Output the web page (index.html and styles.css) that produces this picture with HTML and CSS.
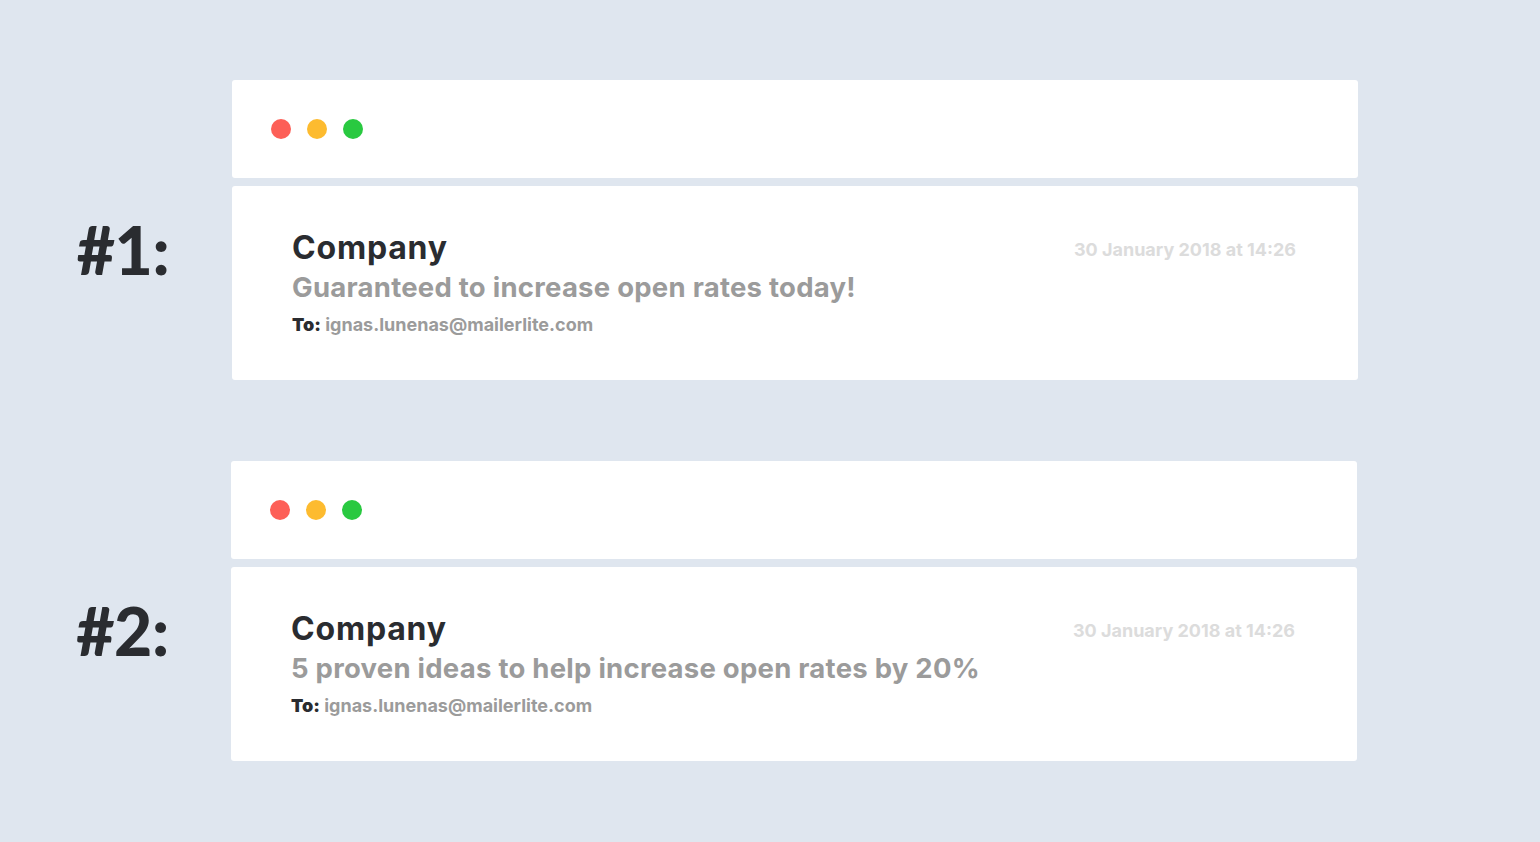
FILE: index.html
```html
<!DOCTYPE html>
<html>
<head>
<meta charset="utf-8">
<link rel="stylesheet" href="styles.css">
</head>
<body>
<main class="page">
  <section class="row row-1">
    <div class="label">#1:</div>
    <div class="window">
      <div class="titlebar">
        <span class="dot dot-red"></span>
        <span class="dot dot-yellow"></span>
        <span class="dot dot-green"></span>
      </div>
      <div class="mail">
        <div class="mail-info">
          <div class="sender">Company</div>
          <div class="subject">Guaranteed to increase open rates today!</div>
          <div class="to"><b>To:</b> ignas.lunenas@mailerlite.com</div>
        </div>
        <div class="date">30 January 2018 at 14:26</div>
      </div>
    </div>
  </section>
  <section class="row row-2">
    <div class="label">#2:</div>
    <div class="window">
      <div class="titlebar">
        <span class="dot dot-red"></span>
        <span class="dot dot-yellow"></span>
        <span class="dot dot-green"></span>
      </div>
      <div class="mail">
        <div class="mail-info">
          <div class="sender">Company</div>
          <div class="subject">5 proven ideas to help increase open rates by 20%</div>
          <div class="to"><b>To:</b> ignas.lunenas@mailerlite.com</div>
        </div>
        <div class="date">30 January 2018 at 14:26</div>
      </div>
    </div>
  </section>
</main>
</body>
</html>
```
FILE: styles.css
```css
html, body {
  margin: 0;
  padding: 0;
  background: #dfe6ef;
  font-family: Inter, "Open Sans", "Liberation Sans", sans-serif;
}
.page {
  width: 1540px;
  height: 842px;
  padding-top: 80px;
  box-sizing: border-box;
  display: flex;
  flex-direction: column;
  gap: 81px;
}
.row {
  display: grid;
  grid-template-columns: 232px 1126px;
}
.row-2 {
  grid-template-columns: 231px 1126px;
}
.label {
  padding-left: 14px;
  text-align: center;
  font-family: Lato, "Open Sans", sans-serif;
  font-weight: 900;
  font-size: 66px;
  color: #2a2c30;
  padding-top: 137px;
  line-height: 66px;
  letter-spacing: -0.5px;
}
.window {
  display: flex;
  flex-direction: column;
  gap: 8px;
}
.titlebar {
  background: #fff;
  height: 98px;
  border-radius: 3px;
  display: flex;
  align-items: center;
  gap: 16px;
  padding-left: 39px;
}
.dot {
  width: 20px;
  height: 20px;
  border-radius: 50%;
}
.dot-red { background: #fd5f57; }
.dot-yellow { background: #fdbb2f; }
.dot-green { background: #29c940; }
.mail {
  background: #fff;
  height: 194px;
  border-radius: 3px;
  box-sizing: border-box;
  padding: 43px 62px 0 60px;
  display: flex;
  justify-content: space-between;
  align-items: flex-start;
}
.sender {
  font-size: 32px;
  font-weight: 700;
  color: #2a2c30;
  line-height: 38px;
  letter-spacing: 0.8px;
}
.subject {
  font-size: 27.5px;
  font-weight: 700;
  color: #9b9b9b;
  line-height: 40px;
  letter-spacing: 0.25px;
}
.to {
  margin-top: 6px;
  font-size: 18px;
  font-weight: 700;
  color: #9b9b9b;
  line-height: 24px;
}
.to b {
  color: #2a2c30;
}
.date {
  margin-top: 1px;
  font-size: 18px;
  font-weight: 700;
  color: #dcdcdc;
  line-height: 40px;
}
```
